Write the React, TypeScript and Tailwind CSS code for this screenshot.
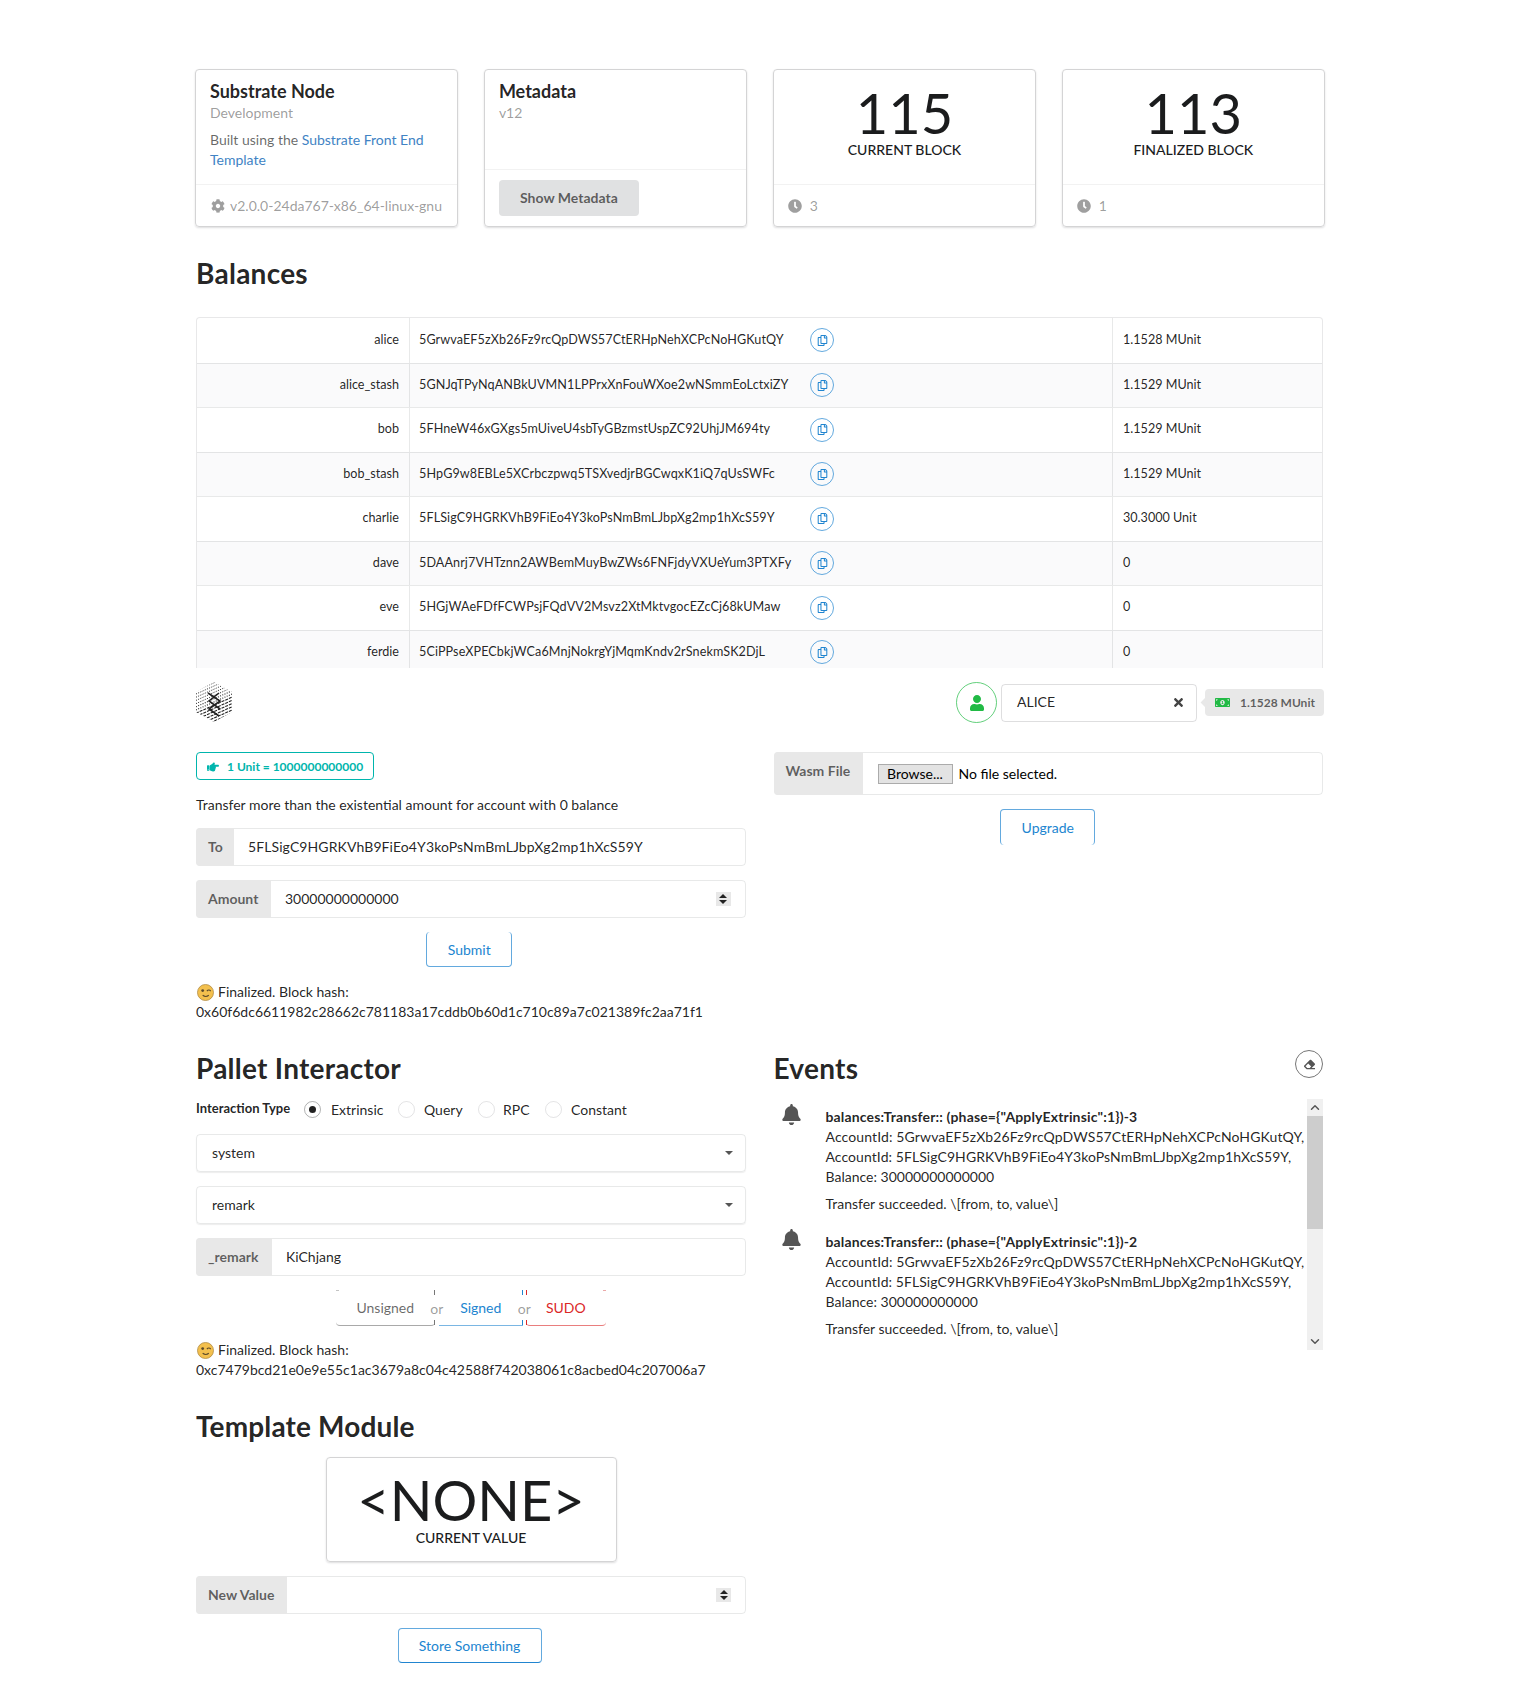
import React from "react";
import { FaBell, FaClock, FaCog, FaEraser, FaHandPointRight, FaMoneyBillAlt, FaRegCopy, FaTimes, FaUser } from "react-icons/fa";
import { ChevronDown, ChevronUp } from "lucide-react";

const accounts = [
  { name: "alice", address: "5GrwvaEF5zXb26Fz9rcQpDWS57CtERHpNehXCPcNoHGKutQY", balance: "1.1528 MUnit" },
  { name: "alice_stash", address: "5GNJqTPyNqANBkUVMN1LPPrxXnFouWXoe2wNSmmEoLctxiZY", balance: "1.1529 MUnit" },
  { name: "bob", address: "5FHneW46xGXgs5mUiveU4sbTyGBzmstUspZC92UhjJM694ty", balance: "1.1529 MUnit" },
  { name: "bob_stash", address: "5HpG9w8EBLe5XCrbczpwq5TSXvedjrBGCwqxK1iQ7qUsSWFc", balance: "1.1529 MUnit" },
  { name: "charlie", address: "5FLSigC9HGRKVhB9FiEo4Y3koPsNmBmLJbpXg2mp1hXcS59Y", balance: "30.3000 Unit" },
  { name: "dave", address: "5DAAnrj7VHTznn2AWBemMuyBwZWs6FNFjdyVXUeYum3PTXFy", balance: "0" },
  { name: "eve", address: "5HGjWAeFDfFCWPsjFQdVV2Msvz2XtMktvgocEZcCj68kUMaw", balance: "0" },
  { name: "ferdie", address: "5CiPPseXPECbkjWCa6MnjNokrgYjMqmKndv2rSnekmSK2DjL", balance: "0" },
];

const events = [
  { title: 'balances:Transfer:: (phase={"ApplyExtrinsic":1})-3', amount: "30000000000000" },
  { title: 'balances:Transfer:: (phase={"ApplyExtrinsic":1})-2', amount: "300000000000" },
];

const Wink = () => (
  <svg width="17" height="17" viewBox="0 0 36 36" className="ml-px shrink-0">
    <circle cx="18" cy="18" r="17" fill="#f3c04e" stroke="#a9833a" strokeWidth="1.5" />
    <circle cx="12" cy="14" r="3" fill="#5b4a2a" />
    <path d="M21 15c2-3 6-3 8 0" fill="none" stroke="#5b4a2a" strokeWidth="2.5" />
    <path d="M12 24c4 3 9 3 13 0" fill="none" stroke="#5b4a2a" strokeWidth="2.5" />
  </svg>
);

// dotted hexagon with the crossed strands in the middle
const Identicon = () => (
  <svg width="36" height="40" viewBox="0 0 36 40">
    <defs>
      <clipPath id="hexagon">
        <path d="M18 0 36 10V30L18 40 0 30V10Z" />
      </clipPath>
    </defs>
    <g clipPath="url(#hexagon)" stroke="#222" fill="none">
      {Array.from({ length: 17 }).map((_, i) => (
        <path
          key={i}
          d={`M0 ${i * 3.2 - 4} L36 ${i * 3.2 - 20}`}
          strokeWidth={i > 8 ? 1.1 : 1}
          strokeDasharray={i > 10 ? "3 1" : "1 1.4"}
        />
      ))}
    </g>
    <path d="M12 11 24 19 13 27 23 34M23 11 13 19 24 27" fill="none" stroke="#222" strokeWidth="1.6" />
  </svg>
);

const Spinner = () => (
  <span className="flex h-[14px] w-[15px] flex-col items-center justify-center gap-[2px] bg-[#e8e8e8]">
    <span className="h-0 w-0 border-x-[4px] border-b-[4px] border-x-transparent border-b-[#222]" />
    <span className="h-0 w-0 border-x-[4px] border-t-[4px] border-x-transparent border-t-[#222]" />
  </span>
);

const Caret = () => <span className="h-0 w-0 border-x-[4px] border-t-[4px] border-x-transparent border-t-[#555]" />;

const Field = ({ label, value, labelWidth, spinner, wide }: { label: string; value: string; labelWidth: string; spinner?: boolean; wide?: boolean }) => (
  <div className="flex h-[38px] rounded border border-[#2224261a] text-[14px]">
    <div className={`${labelWidth} -m-px mr-0 flex shrink-0 items-center rounded-l bg-[#e8e8e8] pb-[2px] pl-[12px] font-bold text-[#00000099]`}>{label}</div>
    <div className="flex flex-1 items-center justify-between pl-[14px] pr-[14px] text-[#000000de]">
      <span className={`pb-[2px] ${wide ? "tracking-[0.1px]" : ""}`}>{value}</span>
      {spinner && <Spinner />}
    </div>
  </div>
);

const SelectBox = ({ value }: { value: string }) => (
  <div className="flex h-[38px] items-center justify-between rounded border border-[#2224261a] pl-[15px] pr-[12px] text-[14px] text-[#000000de] shadow-[0_1px_1px_rgba(34,36,38,0.08)]">
    <span className="pb-[2px]">{value}</span>
    <Caret />
  </div>
);

const Finalized = ({ hash }: { hash: string }) => (
  <div className="text-[14px] leading-[20px] text-[#000000de]">
    <div className="flex items-center gap-[4px]">
      <Wink />
      <span>Finalized. Block hash:</span>
    </div>
    <div>{hash}</div>
  </div>
);

const StatCard = ({ value, label, age }: { value: string; label: string; age: string }) => (
  <div className="flex flex-col rounded border border-[#d4d4d5] shadow-[0_1px_2px_rgba(34,36,38,0.15)]">
    <div className="h-[114px] pt-[15px] text-center">
      <div className="text-[56px] leading-none text-[#1b1c1d]">{value}</div>
      <div className="-mt-px text-[14px] font-medium uppercase leading-[20px] text-[#1b1c1d]">{label}</div>
    </div>
    <div className="flex flex-1 items-center gap-[8px] border-t border-[#0000000d] px-[14px] text-[14px] text-[#00000066]">
      <FaClock className="text-[14px] text-[#9f9f9f]" />
      <span>{age}</span>
    </div>
  </div>
);

export default function App() {
  return (
    <div className="w-full bg-white pb-[29px] font-['Lato','Liberation_Sans',sans-serif] text-[14px] text-[#000000de]">
      <div className="mx-auto w-[1127px] pt-[69px]">
        <div className="-ml-px -mr-[2px] grid h-[158px] grid-cols-4 gap-[25.5px]">
          <div className="flex flex-col rounded border border-[#d4d4d5] shadow-[0_1px_2px_rgba(34,36,38,0.15)]">
            <div className="h-[114px] px-[14px] pt-[10px]">
              <div className="text-[18px] font-bold leading-[23px] text-[#000000de]">Substrate Node</div>
              <div className="leading-[20px] text-[#00000066]">Development</div>
              <div className="mt-[7px] leading-[20px] text-[#00000099]">
                Built using the <span className="text-[#4183c4]">Substrate Front End Template</span>
              </div>
            </div>
            <div className="flex flex-1 items-center gap-[5px] border-t border-[#0000000d] pl-[15px] pr-[14px] text-[#00000066]">
              <FaCog className="shrink-0 text-[14px] text-[#9f9f9f]" />
              <span className="whitespace-nowrap">v2.0.0-24da767-x86_64-linux-gnu</span>
            </div>
          </div>

          <div className="flex flex-col rounded border border-[#d4d4d5] shadow-[0_1px_2px_rgba(34,36,38,0.15)]">
            <div className="h-[99px] px-[14px] pt-[10px]">
              <div className="text-[18px] font-bold leading-[23px] text-[#000000de]">Metadata</div>
              <div className="leading-[20px] text-[#00000066]">v12</div>
            </div>
            <div className="flex-1 border-t border-[#0000000d] px-[14px] pt-[10px]">
              <div className="flex h-[36px] w-[140px] items-center justify-center rounded bg-[#e0e1e2] pb-[2px] font-bold text-[#0009]">Show Metadata</div>
            </div>
          </div>

          <StatCard value="115" label="Current Block" age="3" />
          <StatCard value="113" label="Finalized Block" age="1" />
        </div>

        <h1 className="mb-[26px] mt-[28px] text-[28px] font-bold leading-[36px] tracking-[0.25px] text-[#000000de]">Balances</h1>

        <div className="h-[351px] overflow-hidden text-[12.6px]">
          <table className="w-full table-fixed border-separate border-spacing-0 rounded-t border border-b-0 border-[#2224261a]">
            <colgroup>
              <col className="w-[212px]" />
              <col className="w-[703px]" />
              <col />
            </colgroup>
            <tbody>
              {accounts.map((a, i) => (
                <tr key={a.name} className={`h-[44.5px] ${i % 2 === 1 ? "bg-[#00003205]" : ""}`}>
                  <td className={`pr-[10px] text-right ${i > 0 ? "border-t border-[#2224261a]" : ""}`}>{a.name}</td>
                  <td className={`border-l border-[#2224261a] pl-[9px] ${i > 0 ? "border-t" : ""}`}>
                    <div className="flex items-center">
                      <span className="w-[391px] whitespace-nowrap tracking-[0.1px]">{a.address}</span>
                      <span className="flex h-[24px] w-[24px] items-center justify-center rounded-full border border-[#2185d0b3] text-[#2185d0]">
                        <FaRegCopy className="text-[11px]" />
                      </span>
                    </div>
                  </td>
                  <td className={`border-l border-[#2224261a] pl-[10px] ${i > 0 ? "border-t" : ""}`}>{a.balance}</td>
                </tr>
              ))}
            </tbody>
          </table>
        </div>

        <div className="flex h-[84px] items-start justify-between pt-[14px]">
          <Identicon />
          <div className="-mr-px flex items-center">
            <div className="flex h-[41px] w-[41px] items-center justify-center rounded-full border border-[#21ba45b3] text-[#21ba45]">
              <FaUser className="text-[16px]" />
            </div>
            <div className="ml-[4px] flex h-[38px] w-[196px] items-center justify-between rounded border border-[#22242626] pl-[15px] pr-[11px]">
              <span className="pb-[2px]">ALICE</span>
              <FaTimes className="text-[13px] text-[#444]" />
            </div>
            <div className="relative ml-[8px] flex h-[27px] w-[119px] items-center gap-[10px] rounded bg-[#e8e8e8] pl-[10px] text-[12px] font-bold text-[#00000099]">
              <span className="absolute -left-[3px] top-[10px] h-[7px] w-[7px] rotate-45 bg-[#e8e8e8]" />
              <FaMoneyBillAlt className="relative text-[15px] text-[#21ba45]" />
              <span>1.1528 MUnit</span>
            </div>
          </div>
        </div>

        <div className="grid grid-cols-2 gap-[28px]">
          <div>
            <div className="flex h-[28px] w-[178px] items-center gap-[8px] rounded border border-[#00b5ad] pl-[10px] pt-[1px] text-[12px] font-bold text-[#00b5ad]">
              <FaHandPointRight className="text-[12px]" />
              <span>1 Unit = 1000000000000</span>
            </div>
            <div className="mt-[15px] leading-[20px]">Transfer more than the existential amount for account with 0 balance</div>
            <div className="mt-[13px] flex flex-col gap-[14px]">
              <Field label="To" value="5FLSigC9HGRKVhB9FiEo4Y3koPsNmBmLJbpXg2mp1hXcS59Y" labelWidth="w-[38px]" wide />
              <Field label="Amount" value="30000000000000" labelWidth="w-[75px]" spinner />
            </div>
            <div className="mt-[14px] flex justify-center pr-[3px]">
              <div className="flex h-[35px] w-[86px] items-center justify-center rounded border border-t-0 border-[#2185d0b3] text-[#2185d0]">Submit</div>
            </div>
            <div className="mt-[15px]">
              <Finalized hash="0x60f6dc6611982c28662c781183a17cddb0b60d1c710c89a7c021389fc2aa71f1" />
            </div>
          </div>

          <div>
            <div className="flex h-[43px] rounded border border-[#2224261a]">
              <div className="-m-px flex w-[89px] items-start rounded-l bg-[#e8e8e8] pl-[12px] pt-[8px] font-bold text-[#00000099]">Wasm File</div>
              <div className="flex items-center pl-[16px]">
                <span className="flex h-[20px] w-[75px] items-center justify-center border border-[#ababab] bg-[#e3e3e3] text-[#000]">Browse...</span>
                <span className="ml-[6px] text-[#000]">No file selected.</span>
              </div>
            </div>
            <div className="mt-[14px] flex justify-center pr-[1px]">
              <div className="flex h-[36px] w-[95px] items-center justify-center rounded border border-b-0 border-[#2185d0b3] text-[#2185d0]">Upgrade</div>
            </div>
          </div>
        </div>

        <div className="mt-[28px] grid grid-cols-2 gap-[28px]">
          <div>
            <h1 className="text-[28px] font-bold leading-[36px] tracking-[0.25px]">Pallet Interactor</h1>
            <div className="mt-[13px] flex h-[20px] items-center">
              <span className="w-[108px] text-[13px] font-bold">Interaction Type</span>
              <span className="flex h-[17px] w-[17px] items-center justify-center rounded-full border border-[#22242659]">
                <span className="h-[7px] w-[7px] rounded-full bg-[#000000de]" />
              </span>
              <span className="ml-[10px] w-[67px]">Extrinsic</span>
              <span className="h-[17px] w-[17px] rounded-full border border-[#2224261f]" />
              <span className="ml-[9px] w-[54px]">Query</span>
              <span className="h-[17px] w-[17px] rounded-full border border-[#2224261f]" />
              <span className="ml-[8px] w-[42px]">RPC</span>
              <span className="h-[17px] w-[17px] rounded-full border border-[#2224261f]" />
              <span className="ml-[9px]">Constant</span>
            </div>
            <div className="mt-[15px] flex flex-col gap-[14px]">
              <SelectBox value="system" />
              <SelectBox value="remark" />
              <Field label="_remark" value="KiChjang" labelWidth="w-[76px]" />
            </div>
            <div className="mt-[14px] flex h-[36px] items-center justify-center">
              <div className="relative flex h-full w-[99px] items-center justify-center rounded-b border-b border-[#a9a9a9] text-[#00000099]">
                Unsigned
                <span className="absolute left-0 top-0 h-px w-[3px] bg-[#c4c4c4]" />
                <span className="absolute right-0 top-0 h-[5px] w-px bg-[#767676]" />
                <span className="absolute bottom-0 right-0 h-[5px] w-px bg-[#767676]" />
              </div>
              <span className="flex w-[4px] justify-center whitespace-nowrap text-[#00000066]">or</span>
              <div className="relative flex h-full w-[84px] items-center justify-center border-b border-[#2185d099] text-[#2185d0]">
                Signed
                <span className="absolute right-0 top-0 h-[5px] w-px bg-[#2185d0]" />
                <span className="absolute bottom-0 right-0 h-[5px] w-px bg-[#2185d0]" />
              </div>
              <span className="flex w-[3px] justify-center whitespace-nowrap text-[#00000066]">or</span>
              <div className="relative flex h-full w-[80px] items-center justify-center rounded-b border-b border-[#db282899] text-[#db2828]">
                SUDO
                <span className="absolute left-0 top-0 h-[5px] w-px bg-[#db2828]" />
                <span className="absolute bottom-0 left-0 h-[5px] w-px bg-[#db2828]" />
                <span className="absolute right-0 top-0 h-px w-[3px] bg-[#eba9a9]" />
              </div>
            </div>
            <div className="mt-[14px]">
              <Finalized hash="0xc7479bcd21e0e9e55c1ac3679a8c04c42588f742038061c8acbed04c207006a7" />
            </div>
          </div>

          <div>
            <div className="flex items-start justify-between">
              <h1 className="text-[28px] font-bold leading-[36px] tracking-[0.25px]">Events</h1>
              <span className="flex h-[28px] w-[28px] items-center justify-center rounded-full border border-[#767676] text-[#555]">
                <FaEraser className="text-[11px]" />
              </span>
            </div>
            <div className="mt-[13px] flex h-[251px]">
              <div className="flex-1 overflow-hidden">
                {events.map((e) => (
                  <div key={e.title} className="flex h-[125px]">
                    <FaBell className="ml-[7px] mt-[5px] shrink-0 text-[21px] text-[#555]" />
                    <div className="ml-[24px] whitespace-nowrap pt-[8px] leading-[20px]">
                      <div className="font-bold tracking-[0.15px]">{e.title}</div>
                      <div className="tracking-[0.12px]">AccountId: 5GrwvaEF5zXb26Fz9rcQpDWS57CtERHpNehXCPcNoHGKutQY,</div>
                      <div className="tracking-[0.07px]">AccountId: 5FLSigC9HGRKVhB9FiEo4Y3koPsNmBmLJbpXg2mp1hXcS59Y,</div>
                      <div>Balance: {e.amount}</div>
                      <div className="mt-[7px]">Transfer succeeded. \[from, to, value\]</div>
                    </div>
                  </div>
                ))}
              </div>
              <div className="flex w-[16px] shrink-0 flex-col items-center bg-[#f0f0f0]">
                <ChevronUp className="h-[17px] w-[14px] shrink-0 text-[#555]" strokeWidth={2.5} />
                <div className="h-[113px] w-full bg-[#cdcdcd]" />
                <ChevronDown className="mt-auto h-[17px] w-[14px] shrink-0 text-[#555]" strokeWidth={2.5} />
              </div>
            </div>
          </div>
        </div>

        <div className="w-[550px]">
          <h1 className="mt-[28px] text-[28px] font-bold leading-[36px] tracking-[0.15px]">Template Module</h1>
          <div className="mx-auto mt-[13px] h-[105px] w-[291px] rounded border border-[#d4d4d5] pt-[14px] text-center shadow-[0_1px_2px_rgba(34,36,38,0.15)]">
            <div className="text-[56px] leading-none text-[#1b1c1d]">{"<NONE>"}</div>
            <div className="font-medium uppercase leading-[20px] text-[#1b1c1d]">Current Value</div>
          </div>
          <div className="mt-[14px]">
            <Field label="New Value" value="" labelWidth="w-[91px]" spinner />
          </div>
          <div className="mt-[14px] flex justify-center pr-[3px]">
            <div className="flex h-[35px] w-[144px] items-center justify-center rounded border border-[#2185d0b3] border-b-[#2185d0] text-[#2185d0]">Store Something</div>
          </div>
        </div>
      </div>
    </div>
  );
}
